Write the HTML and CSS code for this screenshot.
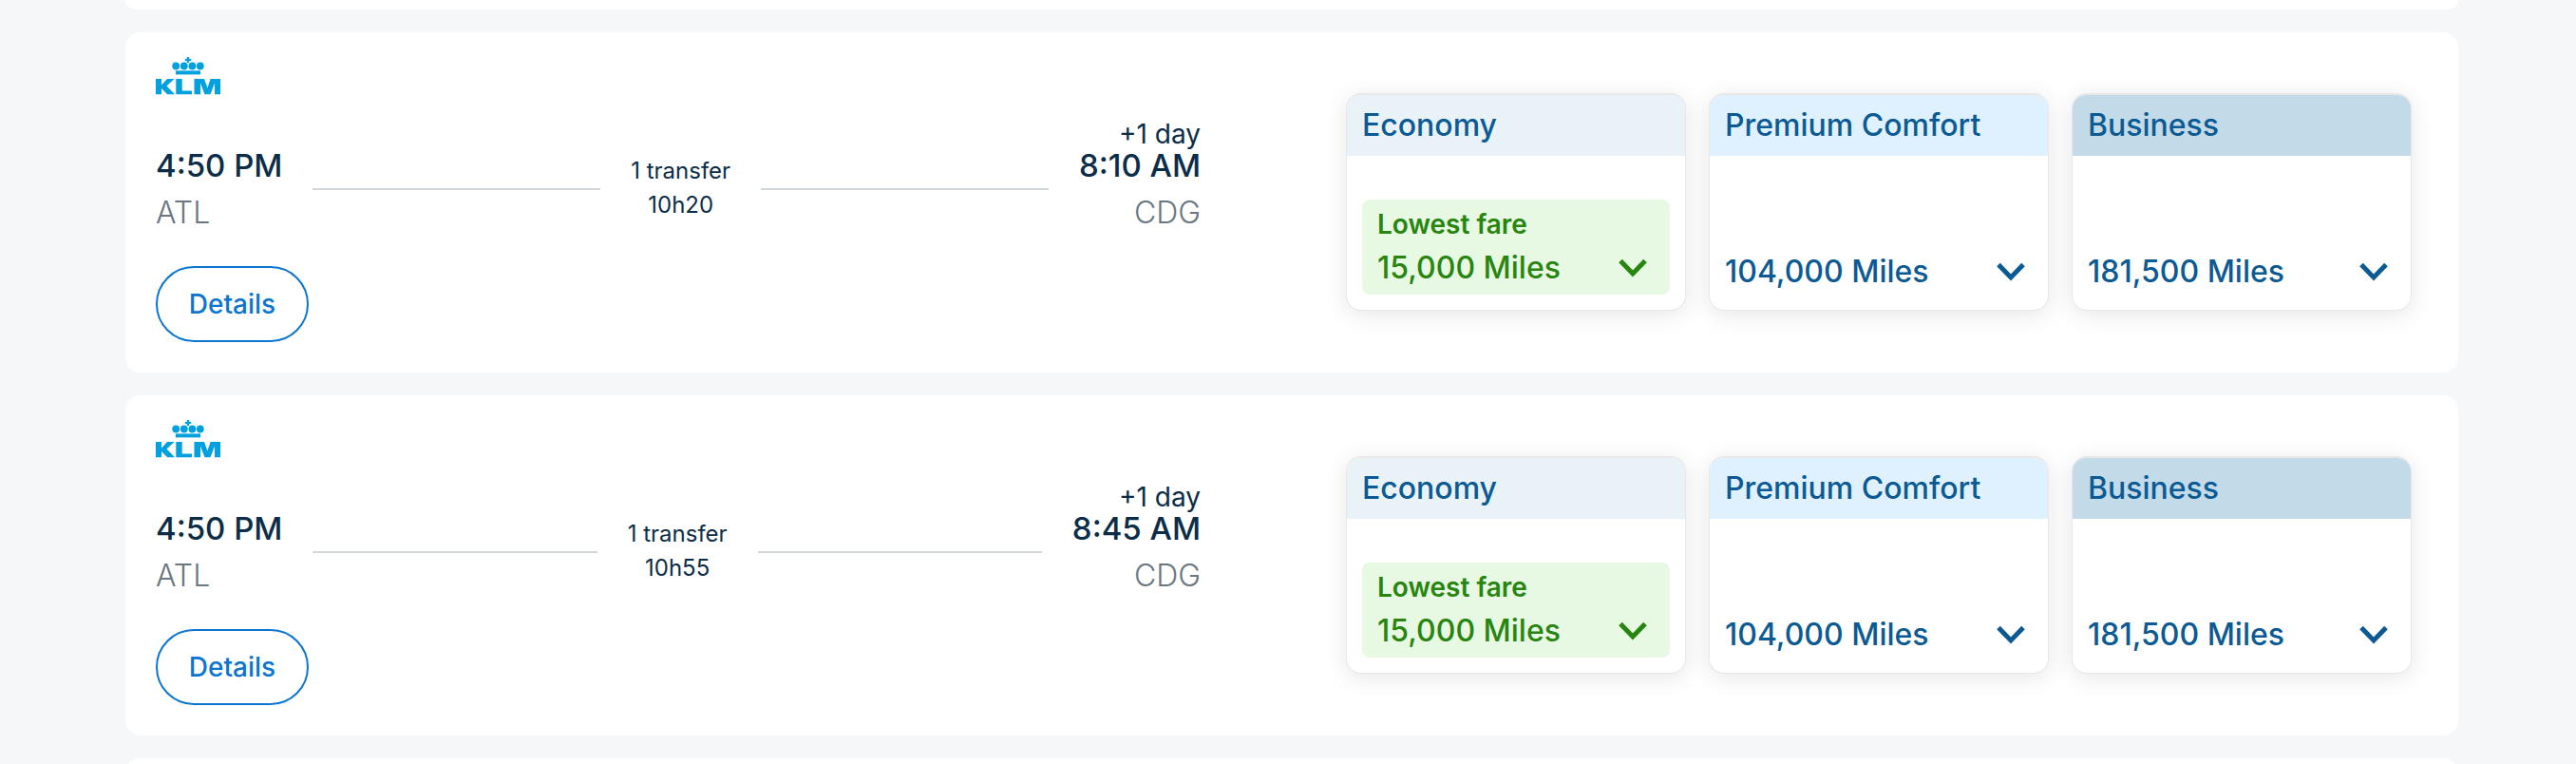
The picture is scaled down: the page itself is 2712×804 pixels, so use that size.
FILE: index.html
```html
<!DOCTYPE html>
<html lang="en">
<head>
    <meta charset="UTF-8">
    <meta name="viewport" content="width=device-width, initial-scale=1.0">
    <title>Flight results</title>
    <link rel="stylesheet" href="styles.css">
</head>
<body>
    <!-- shared icons -->
    <svg class="sprite" aria-hidden="true">
        <symbol id="klm" viewBox="0 0 68 40">
            <path d="M32.8 0h2.4v2h2v2h-2v2h-2.4V4h-2V2h2z"/>
            <circle cx="21.2" cy="9.5" r="3.9"/>
            <circle cx="29.8" cy="9.5" r="3.9"/>
            <circle cx="38.4" cy="9.5" r="3.9"/>
            <circle cx="46.8" cy="9.5" r="3.9"/>
            <path d="M21 14.4h26v4H21z"/>
            <path d="M0 23h6v6.400l6-6.400h7.500l-8 7.500 8.500 8.800h-7.800L6 33v6.300H0z"/>
            <path d="M21.300 23h6.400v12.500H38v3.800H21.300z"/>
            <path d="M40.500 23H51l3.400 9.500L57.600 23H68v16.300h-6V27.500l-4.500 11.800h-6L47 27.500v11.800h-6.500z"/>
        </symbol>
        <symbol id="chevron" viewBox="0 0 30 20">
            <path d="M2 2.500l13 13.500L28 2.500" fill="none" stroke="currentColor" stroke-width="5"/>
        </symbol>
    </svg>

    <main class="results">
        <article class="flight flight-previous"></article>

        <article class="flight">
            <section class="trip">
                <svg class="logo" role="img" aria-label="KLM"><use href="#klm"/></svg>
                <div class="route">
                    <div class="stop">
                        <span class="time">4:50 PM</span>
                        <span class="airport">ATL</span>
                    </div>
                    <span class="line"></span>
                    <div class="duration">
                        <span>1 transfer</span>
                        <span>10h20</span>
                    </div>
                    <span class="line"></span>
                    <div class="stop arrival">
                        <span class="next-day">+1 day</span>
                        <span class="time">8:10 AM</span>
                        <span class="airport">CDG</span>
                    </div>
                </div>
                <button class="details" type="button">Details</button>
            </section>
            <section class="fares">
                <button class="fare economy" type="button">
                    <span class="cabin">Economy</span>
                    <span class="offer lowest">
                        <span class="label">Lowest fare</span>
                        <span class="price">15,000 Miles <svg class="chevron"><use href="#chevron"/></svg></span>
                    </span>
                </button>
                <button class="fare premium" type="button">
                    <span class="cabin">Premium Comfort</span>
                    <span class="offer">
                        <span class="price">104,000 Miles <svg class="chevron"><use href="#chevron"/></svg></span>
                    </span>
                </button>
                <button class="fare business" type="button">
                    <span class="cabin">Business</span>
                    <span class="offer">
                        <span class="price">181,500 Miles <svg class="chevron"><use href="#chevron"/></svg></span>
                    </span>
                </button>
            </section>
        </article>

        <article class="flight">
            <section class="trip">
                <svg class="logo" role="img" aria-label="KLM"><use href="#klm"/></svg>
                <div class="route">
                    <div class="stop">
                        <span class="time">4:50 PM</span>
                        <span class="airport">ATL</span>
                    </div>
                    <span class="line"></span>
                    <div class="duration">
                        <span>1 transfer</span>
                        <span>10h55</span>
                    </div>
                    <span class="line"></span>
                    <div class="stop arrival">
                        <span class="next-day">+1 day</span>
                        <span class="time">8:45 AM</span>
                        <span class="airport">CDG</span>
                    </div>
                </div>
                <button class="details" type="button">Details</button>
            </section>
            <section class="fares">
                <button class="fare economy" type="button">
                    <span class="cabin">Economy</span>
                    <span class="offer lowest">
                        <span class="label">Lowest fare</span>
                        <span class="price">15,000 Miles <svg class="chevron"><use href="#chevron"/></svg></span>
                    </span>
                </button>
                <button class="fare premium" type="button">
                    <span class="cabin">Premium Comfort</span>
                    <span class="offer">
                        <span class="price">104,000 Miles <svg class="chevron"><use href="#chevron"/></svg></span>
                    </span>
                </button>
                <button class="fare business" type="button">
                    <span class="cabin">Business</span>
                    <span class="offer">
                        <span class="price">181,500 Miles <svg class="chevron"><use href="#chevron"/></svg></span>
                    </span>
                </button>
            </section>
        </article>

        <article class="flight flight-next"></article>
    </main>
</body>
</html>
```
FILE: styles.css
```css
* {
    box-sizing: border-box;
}

body {
    margin: 0;
    background-color: #f5f7f8;
    color: #0b2d48;
    font-family: Inter, "Liberation Sans", sans-serif;
    font-size: 24px;
}

button {
    font: inherit;
    cursor: pointer;
}

.sprite {
    display: none;
}

.results {
    display: flex;
    flex-direction: column;
    gap: 24px;
    padding: 0 124px 0 132px;
    height: 100vh;
    overflow: hidden;
}

.flight {
    display: grid;
    grid-template-columns: 1100fr 1122fr;
    column-gap: 153px;
    flex-shrink: 0;
    padding: 26px 49px 32px 32px;
    border-radius: 16px;
    background-color: #fff;
}

.flight-previous {
    height: 10px;
    padding: 0;
    border-radius: 0 0 16px 16px;
}

.flight-next {
    height: 358px;
}

/* itinerary */
.trip {
    display: flex;
    flex-direction: column;
    align-items: flex-start;
}

.logo {
    width: 68px;
    height: 40px;
    fill: #00a1de;
}

.route {
    display: flex;
    align-items: flex-end;
    gap: 32px;
    width: 100%;
    height: 144px;
    margin-bottom: 36px;
}

.stop {
    display: flex;
    flex-direction: column;
}

.arrival {
    align-items: flex-end;
}

.next-day {
    font-size: 28px;
    line-height: 30px;
}

.time {
    font-size: 33px;
    font-weight: 500;
    line-height: 36px;
    margin-bottom: 12px;
}

.airport {
    color: #6a7680;
    font-size: 32px;
    font-weight: 300;
    line-height: 40px;
}

.line {
    flex: 1;
    height: 2px;
    margin-bottom: 44px;
    background-color: #d2d7da;
}

.duration {
    display: flex;
    flex-direction: column;
    margin-bottom: 10px;
    line-height: 36px;
    text-align: center;
}

.details {
    width: 161px;
    height: 80px;
    border: 2px solid #0b75cf;
    border-radius: 40px;
    background-color: #fff;
    color: #0b75cf;
    font-size: 28px;
    font-weight: 500;
}

/* cabin prices */
.fares {
    display: grid;
    grid-template-columns: repeat(3, 1fr);
    gap: 24px;
    align-self: start;
    margin-top: 38px;
}

.fare {
    display: flex;
    flex-direction: column;
    height: 229px;
    padding: 0;
    overflow: hidden;
    border: 1px solid #e8e8e8;
    border-top-width: 2px;
    border-radius: 16px;
    background-color: #fff;
    box-shadow: 0 4px 24px rgba(0, 0, 0, 0.1);
    color: #0c5a93;
    font-size: 32px;
    font-weight: 500;
    text-align: left;
}

.cabin {
    width: 100%;
    padding: 0 16px;
    line-height: 64px;
}

.economy .cabin {
    background-color: #e9f2f7;
}

.premium .cabin {
    background-color: #dff1ff;
}

.business .cabin {
    background-color: #c3dae8;
}

.offer {
    align-self: stretch;
    margin: auto 0 20px;
    padding: 0 24px 0 16px;
}

.price {
    display: flex;
    align-items: center;
    justify-content: space-between;
    line-height: 40px;
}

.lowest {
    margin: auto 16px 16px;
    padding: 8px 24px 8px 16px;
    border-radius: 8px;
    background-color: #e7f9e3;
    color: #28850f;
}

.label {
    display: block;
    margin-bottom: 8px;
    font-size: 28px;
    font-weight: 600;
    line-height: 36px;
}

.chevron {
    width: 30px;
    height: 20px;
}
```
